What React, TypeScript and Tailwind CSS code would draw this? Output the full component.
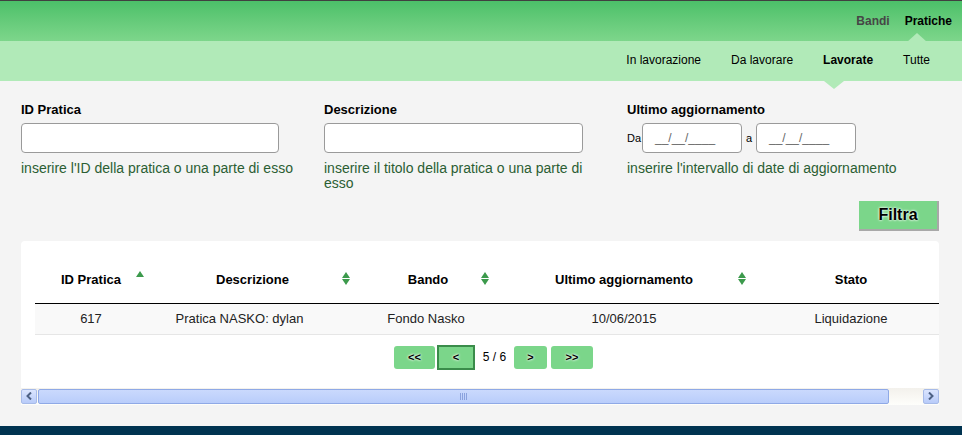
import React from "react";

const GREEN_BTN =
  "bg-[#7bd68a] [text-shadow:0_0_3px_#fff,0_0_2px_#fff] font-bold text-black";

function SortBoth() {
  return (
    <span className="absolute right-[4px] top-[15px] flex flex-col gap-[1px]">
      <span className="h-0 w-0 border-x-[4px] border-x-transparent border-b-[6px] border-b-[#3c9a4c]" />
      <span className="h-0 w-0 border-x-[4px] border-x-transparent border-t-[6px] border-t-[#3c9a4c]" />
    </span>
  );
}

function SortUp() {
  return (
    <span className="absolute right-[3px] top-[14px] h-0 w-0 border-x-[4px] border-x-transparent border-b-[6px] border-b-[#3c9a4c]" />
  );
}

function DateInput() {
  return (
    <div className="flex h-[30px] w-[100px] items-center rounded-[4px] border border-[#9a9a9a] bg-white pl-[12px] text-[12px] text-[#666]">
      __/__/____
    </div>
  );
}

function Field({
  label,
  help,
  children,
}: {
  label: string;
  help: string;
  children: React.ReactNode;
}) {
  return (
    <div>
      <div className="h-[20px] text-[13px] font-bold leading-[20px] text-black">
        {label}
      </div>
      <div className="mt-[3px]">{children}</div>
      <p className="mt-[8px] text-[14px] leading-[15px] text-[#2b5e33]">
        {help}
      </p>
    </div>
  );
}

export default function App() {
  return (
    <div className="flex h-[435px] w-[962px] flex-col overflow-hidden bg-[#f4f4f4] font-['Liberation_Sans',Arial,sans-serif]">
      {/* top nav */}
      <header className="h-[41px] border-t border-[#404040] bg-gradient-to-b from-[#4bc069] to-[#7dd68b]">
        <nav className="flex h-full items-start justify-end gap-[15px] pr-[10px] pt-[11px] text-[12px] font-bold">
          <span className="text-[#464646]">Bandi</span>
          <span className="relative text-black">
            Pratiche
            <span className="absolute left-[2px] top-[21px] h-0 w-0 border-x-[10px] border-x-transparent border-b-[9px] border-b-[#b1eab8]" />
          </span>
        </nav>
      </header>
      <div className="h-[40px] bg-[#b1eab8]">
        <nav className="flex h-full items-start justify-end gap-[30px] pr-[32px] pt-[10px] text-[12px] text-black">
          <span>In lavorazione</span>
          <span>Da lavorare</span>
          <span className="relative font-bold">
            Lavorate
            <span className="absolute left-[1px] top-[30px] h-0 w-0 border-x-[10px] border-x-transparent border-t-[8px] border-t-[#b1eab8]" />
          </span>
          <span>Tutte</span>
        </nav>
      </div>

      {/* filters */}
      <section className="px-[21px] pt-[19px]">
        <div className="grid grid-cols-[280px_280px_300px] gap-x-[22px]">
          <Field
            label="ID Pratica"
            help="inserire l'ID della pratica o una parte di esso"
          >
            <div className="h-[30px] w-[258px] rounded-[4px] border border-[#9a9a9a] bg-white" />
          </Field>
          <div className="pl-[1px]">
            <Field
              label="Descrizione"
              help="inserire il titolo della pratica o una parte di esso"
            >
              <div className="h-[30px] w-[259px] rounded-[4px] border border-[#9a9a9a] bg-white" />
            </Field>
          </div>
          <div className="pl-[2px]">
            <Field
              label="Ultimo aggiornamento"
              help="inserire l'intervallo di date di aggiornamento"
            >
              <div className="flex items-center text-[11px] text-black">
                <span className="w-[15px]">Da</span>
                <DateInput />
                <span className="w-[14px] pl-[4px]">a</span>
                <DateInput />
              </div>
            </Field>
          </div>
        </div>
        <div className="mt-[10px] flex justify-end pr-[2px]">
          <button
            className={`h-[30px] w-[80px] border-b-2 border-r-2 border-[#a8a8a8] text-[16px] ${GREEN_BTN}`}
          >
            Filtra
          </button>
        </div>
      </section>

      {/* results */}
      <section className="ml-[21px] mr-[23px] mt-[10px] overflow-hidden rounded-t-[4px] bg-white">
        <div className="overflow-hidden pl-[14px] pt-[16px]">
          <table className="w-[925px] table-fixed border-collapse text-[13px]">
            <colgroup>
              <col className="w-[112px]" />
              <col className="w-[207px]" />
              <col className="w-[139px]" />
              <col className="w-[257px]" />
              <col className="w-[210px]" />
            </colgroup>
            <thead>
              <tr className="h-[46px] border-b border-black font-bold text-black">
                <th className="relative">
                  ID Pratica
                  <SortUp />
                </th>
                <th className="relative pl-[4px]">
                  Descrizione
                  <SortBoth />
                </th>
                <th className="relative pl-[9px]">
                  Bando
                  <SortBoth />
                </th>
                <th className="relative pl-[5px]">
                  Ultimo aggiornamento
                  <SortBoth />
                </th>
                <th className="pr-[8px]">Stato</th>
              </tr>
            </thead>
            <tbody>
              <tr className="h-[31px] border-b border-[#e6e6e6] bg-[#f9f9f9] text-center text-[#222]">
                <td>617</td>
                <td className="pr-[22px]">Pratica NASKO: dylan</td>
                <td className="pl-[5px]">Fondo Nasko</td>
                <td className="pl-[5px]">10/06/2015</td>
                <td className="pr-[8px]">Liquidazione</td>
              </tr>
            </tbody>
          </table>

          {/* pagination */}
          <div className="mt-[10px] flex items-center pl-[359px] text-[11px]">
            <button className={`h-[23px] w-[41px] rounded-[3px] ${GREEN_BTN}`}>
              &lt;&lt;
            </button>
            <button
              className={`ml-[2px] h-[25px] w-[38px] border-2 border-[#3a8c4a] ${GREEN_BTN}`}
            >
              &lt;
            </button>
            <span className="w-[39px] text-center text-[12px] text-black">
              5 / 6
            </span>
            <button className={`h-[23px] w-[33px] rounded-[3px] ${GREEN_BTN}`}>
              &gt;
            </button>
            <button
              className={`ml-[4px] h-[23px] w-[42px] rounded-[3px] ${GREEN_BTN}`}
            >
              &gt;&gt;
            </button>
          </div>
        </div>

        {/* scrollbar */}
        <div className="mt-[18px] flex h-[17px] items-stretch bg-gradient-to-b from-[#f3f1ec] to-[#fefefb] py-[1px]">
          <div className="flex w-[16px] items-center justify-center rounded-[2px] border border-[#a7bbe8] bg-gradient-to-b from-[#dbe5fe] to-[#b8cbf9]">
            <svg width="6" height="8" viewBox="0 0 6 8">
              <path d="M5 0.5 L1.5 4 L5 7.5" stroke="#4d6185" strokeWidth="2" fill="none" />
            </svg>
          </div>
          <div className="ml-[1px] flex w-[851px] items-center justify-center rounded-[2px] border border-[#8fa9e6] bg-gradient-to-b from-[#cad9fd] to-[#b9cdfb]">
            <div className="flex gap-[1px]">
              <span className="h-[7px] w-[1px] bg-[#8aa2de]" />
              <span className="h-[7px] w-[1px] bg-[#8aa2de]" />
              <span className="h-[7px] w-[1px] bg-[#8aa2de]" />
              <span className="h-[7px] w-[1px] bg-[#8aa2de]" />
            </div>
          </div>
          <div className="flex-1" />
          <div className="flex w-[16px] items-center justify-center rounded-[2px] border border-[#a7bbe8] bg-gradient-to-b from-[#dbe5fe] to-[#b8cbf9]">
            <svg width="6" height="8" viewBox="0 0 6 8">
              <path d="M1 0.5 L4.5 4 L1 7.5" stroke="#4d6185" strokeWidth="2" fill="none" />
            </svg>
          </div>
        </div>
      </section>

      <div className="flex-1" />
      <footer className="h-[9px] bg-[#003350]" />
    </div>
  );
}
